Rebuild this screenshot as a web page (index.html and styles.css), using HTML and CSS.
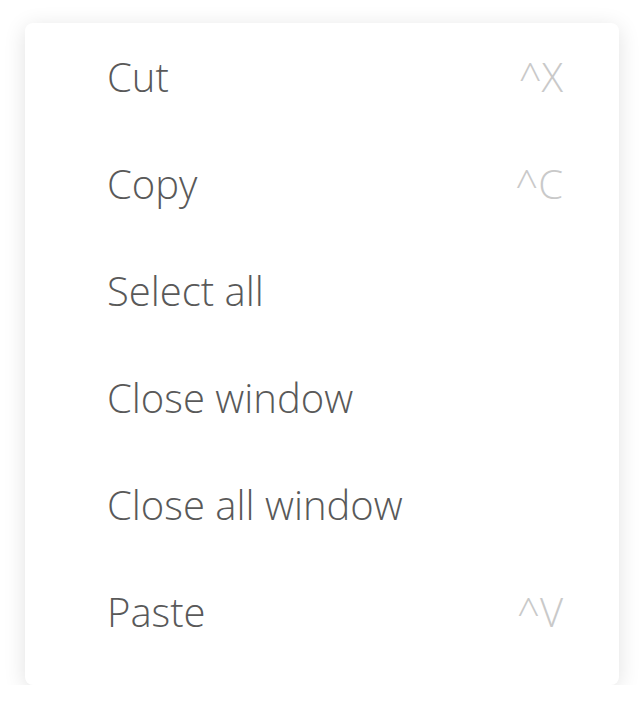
FILE: index.html
```html
<!DOCTYPE html>
<html lang="en">
<head>
    <meta charset="UTF-8">
    <meta name="viewport" content="width=device-width, initial-scale=1.0">
    <title>Context menu</title>
    <link rel="stylesheet" href="styles.css">
</head>
<body>

    <!-- context menu -->
    <ul class="menu">
        <li class="menu-item"><span class="label">Cut</span><span class="shortcut">^X</span></li>
        <li class="menu-item"><span class="label">Copy</span><span class="shortcut">^C</span></li>
        <li class="menu-item"><span class="label">Select all</span></li>
        <li class="menu-item"><span class="label">Close window</span></li>
        <li class="menu-item"><span class="label">Close all window</span></li>
        <li class="menu-item"><span class="label">Paste</span><span class="shortcut">^V</span></li>
    </ul>

</body>
</html>
```
FILE: styles.css
```css
body {
    margin: 0;
    background: #fff;
    font-family: 'Open Sans', 'Noto Sans', sans-serif;
}
.menu {
    list-style: none;
    margin: 23px 0 0 25px;
    padding: 0 56px 20px 82px;
    width: 456px;
    background: #fff;
    border-radius: 8px;
    box-shadow: 0 4px 22px rgba(0, 0, 0, 0.12);
}
.menu-item {
    display: flex;
    justify-content: space-between;
    align-items: baseline;
    height: 107px;
    line-height: 107px;
    font-size: 40px;
    font-weight: 300;
}
.label {
    color: #595959;
}
.shortcut {
    color: #c9c9c9;
}
```
